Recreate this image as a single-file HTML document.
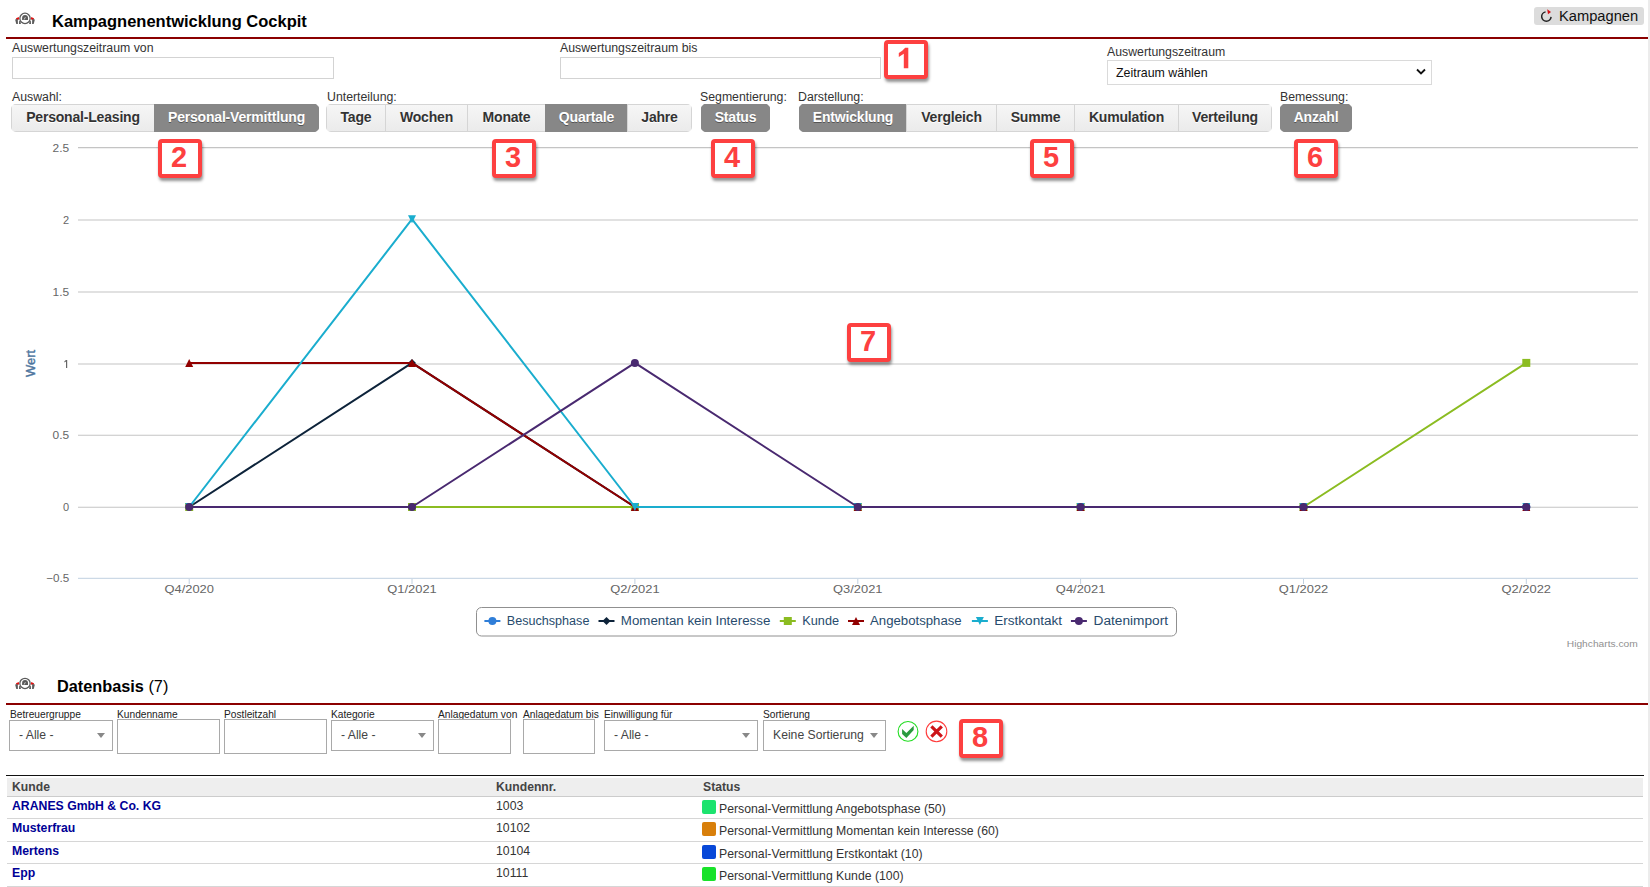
<!DOCTYPE html>
<html><head><meta charset="utf-8">
<style>
*{box-sizing:border-box;}
html,body{margin:0;padding:0;background:#fff;width:1650px;height:887px;overflow:hidden;position:relative;font-family:"Liberation Sans",sans-serif;color:#333;}
.a{position:absolute;white-space:nowrap;}
.redline{position:absolute;left:6px;width:1642px;height:2px;background:#8b0000;}
.sb{position:absolute;left:1648px;top:0;width:2px;height:887px;background:#ececec;}
.lbl{position:absolute;font-size:12.3px;color:#333;line-height:14px;white-space:nowrap;}
.inp{position:absolute;border:1px solid #d3d3d3;background:#fff;}
.grp{position:absolute;top:104px;height:28px;border-radius:5px;overflow:hidden;display:flex;}
.btn{height:28px;line-height:24px;font-weight:bold;font-size:14px;letter-spacing:-0.19px;color:#333;text-align:center;background:linear-gradient(#f6f6f6,#ebebeb);border:1px solid #d5d5d5;border-right:none;text-shadow:0 1px 0 #fff;}
.btn:last-child{border-right:1px solid #d5d5d5;}
.btn.on{background:#878787;color:#fff;text-shadow:0 1px 0 #555;border-color:#878787;}
.btn.on + .btn{border-left-color:#d5d5d5;}
.badge{position:absolute;width:44px;height:39px;border:4px solid #fd4040;border-radius:4px;background:#fff;box-shadow:1px 3px 3px rgba(0,0,0,0.42);color:#fd4040;font-weight:bold;font-size:29px;text-align:center;line-height:28px;text-indent:-2px;}
.flbl{position:absolute;top:709px;font-size:10.2px;color:#222;line-height:12px;white-space:nowrap;}
.sel{position:absolute;top:720px;height:31px;border:1px solid #a9a9a9;background:#fff;font-size:12.2px;color:#444;line-height:29px;padding-left:9px;white-space:nowrap;}
.sel:after{content:"";position:absolute;right:7px;top:12px;border-left:4px solid transparent;border-right:4px solid transparent;border-top:5px solid #888;}
.finp{position:absolute;top:719px;height:35px;border:1px solid #a9a9a9;background:#fff;}
.row{position:absolute;left:7px;width:1636px;border-bottom:1px solid #d6d6d6;}
.cell{position:absolute;font-size:12.25px;white-space:nowrap;}
.sw{position:absolute;width:14px;height:14px;border-radius:2px;}
</style></head><body>
<div class="sb"></div>

<!-- Header -->
<svg class="a" style="left:10px;top:7px" width="30" height="22" viewBox="0 0 30 22">
  <circle cx="15" cy="11.4" r="5.15" fill="none" stroke="#5a5a5a" stroke-width="1.25"/>
  <path d="M12.1 13 V10.9 A2.95 3 0 0 1 18 10.9 V13 Z" fill="#5a5a5a"/>
  <path d="M15.4 10.2 L14.1 12.6" stroke="#e6e6e6" stroke-width="0.8"/>
  <polygon points="6.0,11.2 8.8,9.9 9.1,12.6 6.4,12.9" fill="#e01010"/><polygon points="24.0,11.2 21.2,9.9 20.9,12.6 23.6,12.9" fill="#e01010"/>
  <polygon points="5.1,12.6 7.8,12.1 7.9,17.1 6.3,17.1" fill="#5a5a5a"/><polygon points="24.9,12.6 22.2,12.1 22.1,17.1 23.7,17.1" fill="#5a5a5a"/>
  <polygon points="9.2,13.9 10.4,13.9 10.9,17.1 9.0,17.1" fill="#5a5a5a"/><polygon points="20.8,13.9 19.6,13.9 19.1,17.1 21.0,17.1" fill="#5a5a5a"/>
</svg>
<div class="a" style="left:52px;top:11px;font-size:16.5px;font-weight:bold;color:#000;line-height:20px;">Kampagnenentwicklung Cockpit</div>
<div class="a" style="left:1534px;top:7px;width:110px;height:18px;background:#dcdcdc;border-radius:3px;"></div>
<svg class="a" style="left:1541px;top:8.7px" width="13" height="15" viewBox="0 0 13 15">
  <path d="M10.08 7.91 A4.7 4.7 0 1 1 4.58 2.87" fill="none" stroke="#222" stroke-width="1.5"/>
  <path d="M6.2 0.2 L10 2.9 L7 5.3 Z" fill="#d40f14"/>
</svg>
<div class="a" style="left:1559px;top:7px;font-size:14.7px;color:#111;line-height:18px;">Kampagnen</div>
<div class="redline" style="top:37px"></div>

<!-- Filters row 1 -->
<div class="lbl" style="left:12px;top:41px;">Auswertungszeitraum von</div>
<div class="inp" style="left:12px;top:57px;width:322px;height:22px;"></div>
<div class="lbl" style="left:560px;top:41px;">Auswertungszeitraum bis</div>
<div class="inp" style="left:560px;top:57px;width:321px;height:22px;"></div>
<div class="lbl" style="left:1107px;top:45px;">Auswertungszeitraum</div>
<div class="inp" style="left:1107px;top:60px;width:325px;height:25px;border-color:#dadada;"></div>
<div class="a" style="left:1116px;top:65px;font-size:12.4px;color:#111;line-height:16px;">Zeitraum wählen</div>
<svg class="a" style="left:1416px;top:68.4px" width="10" height="8" viewBox="0 0 10 8"><path d="M1 1.5 L5 5.5 L9 1.5" fill="none" stroke="#111" stroke-width="1.8"/></svg>

<!-- Button groups -->
<div class="lbl" style="left:12px;top:90px;">Auswahl:</div>
<div class="grp" style="left:11px;width:308px;">
  <div class="btn" style="width:143px">Personal-Leasing</div>
  <div class="btn on" style="width:165px">Personal-Vermittlung</div>
</div>
<div class="lbl" style="left:327px;top:90px;">Unterteilung:</div>
<div class="grp" style="left:326px;width:366px;">
  <div class="btn" style="width:59px">Tage</div>
  <div class="btn" style="width:82px">Wochen</div>
  <div class="btn" style="width:78px">Monate</div>
  <div class="btn on" style="width:82px">Quartale</div>
  <div class="btn" style="width:65px">Jahre</div>
</div>
<div class="lbl" style="left:700px;top:90px;">Segmentierung:</div>
<div class="grp" style="left:701px;width:69px;">
  <div class="btn on" style="width:69px">Status</div>
</div>
<div class="lbl" style="left:798px;top:90px;">Darstellung:</div>
<div class="grp" style="left:799px;width:473px;">
  <div class="btn on" style="width:107px">Entwicklung</div>
  <div class="btn" style="width:90px">Vergleich</div>
  <div class="btn" style="width:78px">Summe</div>
  <div class="btn" style="width:104px">Kumulation</div>
  <div class="btn" style="width:94px">Verteilung</div>
</div>
<div class="lbl" style="left:1280px;top:90px;">Bemessung:</div>
<div class="grp" style="left:1280px;width:72px;">
  <div class="btn on" style="width:72px">Anzahl</div>
</div>

<!-- CHART -->
<div id="chart"><svg class="a" style="left:0;top:0" width="1650" height="660" viewBox="0 0 1650 660">
<line x1="78" x2="1638" y1="147.6" y2="147.6" stroke="#c4c4c4" stroke-width="1.05"/>
<line x1="78" x2="1638" y1="220.0" y2="220.0" stroke="#c4c4c4" stroke-width="1.05"/>
<line x1="78" x2="1638" y1="291.9" y2="291.9" stroke="#c4c4c4" stroke-width="1.05"/>
<line x1="78" x2="1638" y1="363.9" y2="363.9" stroke="#c4c4c4" stroke-width="1.05"/>
<line x1="78" x2="1638" y1="435.3" y2="435.3" stroke="#c4c4c4" stroke-width="1.05"/>
<line x1="78" x2="1638" y1="507.2" y2="507.2" stroke="#c4c4c4" stroke-width="1.05"/>
<line x1="78" x2="1638" y1="578.3" y2="578.3" stroke="#C0D0E0" stroke-width="1"/>
<line x1="189.2" x2="189.2" y1="579" y2="584" stroke="#C0D0E0" stroke-width="1"/>
<line x1="412.0" x2="412.0" y1="579" y2="584" stroke="#C0D0E0" stroke-width="1"/>
<line x1="634.9" x2="634.9" y1="579" y2="584" stroke="#C0D0E0" stroke-width="1"/>
<line x1="857.8" x2="857.8" y1="579" y2="584" stroke="#C0D0E0" stroke-width="1"/>
<line x1="1080.6" x2="1080.6" y1="579" y2="584" stroke="#C0D0E0" stroke-width="1"/>
<line x1="1303.5" x2="1303.5" y1="579" y2="584" stroke="#C0D0E0" stroke-width="1"/>
<line x1="1526.3" x2="1526.3" y1="579" y2="584" stroke="#C0D0E0" stroke-width="1"/>
<text x="69.2" y="151.6" text-anchor="end" font-family="Liberation Sans" font-size="11" fill="#666" textLength="16.6" lengthAdjust="spacingAndGlyphs">2.5</text>
<text x="69.2" y="224.0" text-anchor="end" font-family="Liberation Sans" font-size="11" fill="#666">2</text>
<text x="69.2" y="295.9" text-anchor="end" font-family="Liberation Sans" font-size="11" fill="#666" textLength="16.6" lengthAdjust="spacingAndGlyphs">1.5</text>
<path d="M66.0 359.9 L67.2 359.9 L67.2 367.9 L66.0 367.9 L66.0 361.5 L64.4 362.5 L64.4 361.3 Z" fill="#666"/>
<text x="69.2" y="439.3" text-anchor="end" font-family="Liberation Sans" font-size="11" fill="#666" textLength="16.6" lengthAdjust="spacingAndGlyphs">0.5</text>
<text x="69.2" y="511.2" text-anchor="end" font-family="Liberation Sans" font-size="11" fill="#666">0</text>
<text x="69.2" y="582.3" text-anchor="end" font-family="Liberation Sans" font-size="11" fill="#666" textLength="23.0" lengthAdjust="spacingAndGlyphs">−0.5</text>
<text x="189.2" y="592.7" text-anchor="middle" font-family="Liberation Sans" font-size="11" fill="#666" textLength="49.5" lengthAdjust="spacingAndGlyphs">Q4/2020</text>
<text x="412.0" y="592.7" text-anchor="middle" font-family="Liberation Sans" font-size="11" fill="#666" textLength="49.5" lengthAdjust="spacingAndGlyphs">Q1/2021</text>
<text x="634.9" y="592.7" text-anchor="middle" font-family="Liberation Sans" font-size="11" fill="#666" textLength="49.5" lengthAdjust="spacingAndGlyphs">Q2/2021</text>
<text x="857.8" y="592.7" text-anchor="middle" font-family="Liberation Sans" font-size="11" fill="#666" textLength="49.5" lengthAdjust="spacingAndGlyphs">Q3/2021</text>
<text x="1080.6" y="592.7" text-anchor="middle" font-family="Liberation Sans" font-size="11" fill="#666" textLength="49.5" lengthAdjust="spacingAndGlyphs">Q4/2021</text>
<text x="1303.5" y="592.7" text-anchor="middle" font-family="Liberation Sans" font-size="11" fill="#666" textLength="49.5" lengthAdjust="spacingAndGlyphs">Q1/2022</text>
<text x="1526.3" y="592.7" text-anchor="middle" font-family="Liberation Sans" font-size="11" fill="#666" textLength="49.5" lengthAdjust="spacingAndGlyphs">Q2/2022</text>
<text x="0" y="0" transform="translate(34.5,363.4) rotate(-90)" text-anchor="middle" font-family="Liberation Sans" font-size="12.5" fill="#4d759e" stroke="#4d759e" stroke-width="0.4" textLength="27" lengthAdjust="spacingAndGlyphs">Wert</text>
<polyline points="189.2,507.0 412.0,507.0 634.9,507.0 857.8,507.0 1080.6,507.0 1303.5,507.0 1526.3,507.0" fill="none" stroke="#2f7ed8" stroke-width="2" stroke-linejoin="round" stroke-linecap="round"/>
<circle cx="189.2" cy="507.0" r="4" fill="#2f7ed8"/>
<circle cx="412.0" cy="507.0" r="4" fill="#2f7ed8"/>
<circle cx="634.9" cy="507.0" r="4" fill="#2f7ed8"/>
<circle cx="857.8" cy="507.0" r="4" fill="#2f7ed8"/>
<circle cx="1080.6" cy="507.0" r="4" fill="#2f7ed8"/>
<circle cx="1303.5" cy="507.0" r="4" fill="#2f7ed8"/>
<circle cx="1526.3" cy="507.0" r="4" fill="#2f7ed8"/>
<polyline points="189.2,507.0 412.0,362.9 634.9,507.0 857.8,507.0 1080.6,507.0 1303.5,507.0 1526.3,507.0" fill="none" stroke="#0d233a" stroke-width="2" stroke-linejoin="round" stroke-linecap="round"/>
<path d="M189.2 503.0L193.2 507.0L189.2 511.0L185.2 507.0Z" fill="#0d233a"/>
<path d="M412.0 358.9L416.0 362.9L412.0 366.9L408.0 362.9Z" fill="#0d233a"/>
<path d="M634.9 503.0L638.9 507.0L634.9 511.0L630.9 507.0Z" fill="#0d233a"/>
<path d="M857.8 503.0L861.8 507.0L857.8 511.0L853.8 507.0Z" fill="#0d233a"/>
<path d="M1080.6 503.0L1084.6 507.0L1080.6 511.0L1076.6 507.0Z" fill="#0d233a"/>
<path d="M1303.5 503.0L1307.5 507.0L1303.5 511.0L1299.5 507.0Z" fill="#0d233a"/>
<path d="M1526.3 503.0L1530.3 507.0L1526.3 511.0L1522.3 507.0Z" fill="#0d233a"/>
<polyline points="189.2,507.0 412.0,507.0 634.9,507.0 857.8,507.0 1080.6,507.0 1303.5,507.0 1526.3,362.9" fill="none" stroke="#8bbc21" stroke-width="2" stroke-linejoin="round" stroke-linecap="round"/>
<rect x="185.2" y="503.0" width="8" height="8" fill="#8bbc21"/>
<rect x="408.0" y="503.0" width="8" height="8" fill="#8bbc21"/>
<rect x="630.9" y="503.0" width="8" height="8" fill="#8bbc21"/>
<rect x="853.8" y="503.0" width="8" height="8" fill="#8bbc21"/>
<rect x="1076.6" y="503.0" width="8" height="8" fill="#8bbc21"/>
<rect x="1299.5" y="503.0" width="8" height="8" fill="#8bbc21"/>
<rect x="1522.3" y="358.9" width="8" height="8" fill="#8bbc21"/>
<polyline points="189.2,362.9 412.0,362.9 634.9,507.0 857.8,507.0 1080.6,507.0 1303.5,507.0 1526.3,507.0" fill="none" stroke="#910000" stroke-width="2" stroke-linejoin="round" stroke-linecap="round"/>
<path d="M189.2 358.9L193.2 366.9L185.2 366.9Z" fill="#910000"/>
<path d="M412.0 358.9L416.0 366.9L408.0 366.9Z" fill="#910000"/>
<path d="M634.9 503.0L638.9 511.0L630.9 511.0Z" fill="#910000"/>
<path d="M857.8 503.0L861.8 511.0L853.8 511.0Z" fill="#910000"/>
<path d="M1080.6 503.0L1084.6 511.0L1076.6 511.0Z" fill="#910000"/>
<path d="M1303.5 503.0L1307.5 511.0L1299.5 511.0Z" fill="#910000"/>
<path d="M1526.3 503.0L1530.3 511.0L1522.3 511.0Z" fill="#910000"/>
<polyline points="189.2,507.0 412.0,219.2 634.9,507.0 857.8,507.0 1080.6,507.0 1303.5,507.0 1526.3,507.0" fill="none" stroke="#1aadce" stroke-width="2" stroke-linejoin="round" stroke-linecap="round"/>
<path d="M185.2 503.0L193.2 503.0L189.2 511.0Z" fill="#1aadce"/>
<path d="M408.0 215.2L416.0 215.2L412.0 223.2Z" fill="#1aadce"/>
<path d="M630.9 503.0L638.9 503.0L634.9 511.0Z" fill="#1aadce"/>
<path d="M853.8 503.0L861.8 503.0L857.8 511.0Z" fill="#1aadce"/>
<path d="M1076.6 503.0L1084.6 503.0L1080.6 511.0Z" fill="#1aadce"/>
<path d="M1299.5 503.0L1307.5 503.0L1303.5 511.0Z" fill="#1aadce"/>
<path d="M1522.3 503.0L1530.3 503.0L1526.3 511.0Z" fill="#1aadce"/>
<polyline points="189.2,507.0 412.0,507.0 634.9,362.9 857.8,507.0 1080.6,507.0 1303.5,507.0 1526.3,507.0" fill="none" stroke="#492970" stroke-width="2" stroke-linejoin="round" stroke-linecap="round"/>
<circle cx="189.2" cy="507.0" r="4" fill="#492970"/>
<circle cx="412.0" cy="507.0" r="4" fill="#492970"/>
<circle cx="634.9" cy="362.9" r="4" fill="#492970"/>
<circle cx="857.8" cy="507.0" r="4" fill="#492970"/>
<circle cx="1080.6" cy="507.0" r="4" fill="#492970"/>
<circle cx="1303.5" cy="507.0" r="4" fill="#492970"/>
<circle cx="1526.3" cy="507.0" r="4" fill="#492970"/>
<rect x="476.5" y="607.5" width="700" height="28.5" rx="5" ry="5" fill="#fff" stroke="#909090" stroke-width="1"/>
<line x1="484.4" x2="500.4" y1="621" y2="621" stroke="#2f7ed8" stroke-width="2"/>
<circle cx="492.4" cy="621.0" r="4" fill="#2f7ed8"/>
<text x="506.8" y="625" font-family="Liberation Sans" font-size="12" fill="#274b6d" textLength="82.6" lengthAdjust="spacingAndGlyphs">Besuchsphase</text>
<line x1="598.5" x2="614.5" y1="621" y2="621" stroke="#0d233a" stroke-width="2"/>
<path d="M606.5 617.0L610.5 621.0L606.5 625.0L602.5 621.0Z" fill="#0d233a"/>
<text x="620.8" y="625" font-family="Liberation Sans" font-size="12" fill="#274b6d" textLength="149.5" lengthAdjust="spacingAndGlyphs">Momentan kein Interesse</text>
<line x1="779.8" x2="795.8" y1="621" y2="621" stroke="#8bbc21" stroke-width="2"/>
<rect x="783.8" y="617.0" width="8" height="8" fill="#8bbc21"/>
<text x="802.3" y="625" font-family="Liberation Sans" font-size="12" fill="#274b6d" textLength="36.7" lengthAdjust="spacingAndGlyphs">Kunde</text>
<line x1="848" x2="864" y1="621" y2="621" stroke="#910000" stroke-width="2"/>
<path d="M856.0 617.0L860.0 625.0L852.0 625.0Z" fill="#910000"/>
<text x="870" y="625" font-family="Liberation Sans" font-size="12" fill="#274b6d" textLength="91.7" lengthAdjust="spacingAndGlyphs">Angebotsphase</text>
<line x1="971.9" x2="987.9" y1="621" y2="621" stroke="#1aadce" stroke-width="2"/>
<path d="M975.9 617.0L983.9 617.0L979.9 625.0Z" fill="#1aadce"/>
<text x="994.2" y="625" font-family="Liberation Sans" font-size="12" fill="#274b6d" textLength="67.9" lengthAdjust="spacingAndGlyphs">Erstkontakt</text>
<line x1="1070.9" x2="1086.9" y1="621" y2="621" stroke="#492970" stroke-width="2"/>
<circle cx="1078.9" cy="621.0" r="4" fill="#492970"/>
<text x="1093.6" y="625" font-family="Liberation Sans" font-size="12" fill="#274b6d" textLength="74.5" lengthAdjust="spacingAndGlyphs">Datenimport</text>
<text x="1637.7" y="646.9" text-anchor="end" font-family="Liberation Sans" font-size="9" fill="#909090" textLength="70.9" lengthAdjust="spacingAndGlyphs">Highcharts.com</text>
</svg></div>

<!-- Section 2 -->
<svg class="a" style="left:10px;top:672px" width="30" height="22" viewBox="0 0 30 22">
  <circle cx="15" cy="11.4" r="5.15" fill="none" stroke="#5a5a5a" stroke-width="1.25"/>
  <path d="M12.1 13 V10.9 A2.95 3 0 0 1 18 10.9 V13 Z" fill="#5a5a5a"/>
  <path d="M15.4 10.2 L14.1 12.6" stroke="#e6e6e6" stroke-width="0.8"/>
  <polygon points="6.0,11.2 8.8,9.9 9.1,12.6 6.4,12.9" fill="#e01010"/><polygon points="24.0,11.2 21.2,9.9 20.9,12.6 23.6,12.9" fill="#e01010"/>
  <polygon points="5.1,12.6 7.8,12.1 7.9,17.1 6.3,17.1" fill="#5a5a5a"/><polygon points="24.9,12.6 22.2,12.1 22.1,17.1 23.7,17.1" fill="#5a5a5a"/>
  <polygon points="9.2,13.9 10.4,13.9 10.9,17.1 9.0,17.1" fill="#5a5a5a"/><polygon points="20.8,13.9 19.6,13.9 19.1,17.1 21.0,17.1" fill="#5a5a5a"/>
</svg>
<div class="a" style="left:57px;top:676px;font-size:16.3px;color:#000;line-height:20px;"><b>Datenbasis</b> (7)</div>
<div class="redline" style="top:703px"></div>

<div class="flbl" style="left:10px;">Betreuergruppe</div>
<div class="sel" style="left:9px;width:104px;">- Alle -</div>
<div class="flbl" style="left:117px;">Kundenname</div>
<div class="finp" style="left:117px;width:103px;"></div>
<div class="flbl" style="left:224px;">Postleitzahl</div>
<div class="finp" style="left:224px;width:103px;"></div>
<div class="flbl" style="left:331px;">Kategorie</div>
<div class="sel" style="left:331px;width:103px;">- Alle -</div>
<div class="flbl" style="left:438px;">Anlagedatum von</div>
<div class="finp" style="left:438px;width:73px;"></div>
<div class="flbl" style="left:523px;">Anlagedatum bis</div>
<div class="finp" style="left:523px;width:72px;"></div>
<div class="flbl" style="left:604px;">Einwilligung für</div>
<div class="sel" style="left:604px;width:154px;">- Alle -</div>
<div class="flbl" style="left:763px;">Sortierung</div>
<div class="sel" style="left:763px;width:123px;">Keine Sortierung</div>
<svg class="a" style="left:896px;top:720px" width="24" height="24" viewBox="0 0 24 24">
  <circle cx="12" cy="11.4" r="9.9" fill="#fff" stroke="#22dd22" stroke-width="1.1"/>
  <path d="M6.1 8.9 L10.4 12.9 L17.7 5.8 L17.7 9.9 L10.4 17.9 L6.1 14 Z" fill="#2a9a3e"/>
</svg>
<svg class="a" style="left:924px;top:720px" width="26" height="24" viewBox="0 0 26 24">
  <circle cx="12.5" cy="11.4" r="10.3" fill="#fff" stroke="#ff3b3b" stroke-width="1.1"/>
  <path d="M7.4 6.4 L17.8 16.6 M17.8 6.4 L7.4 16.6" stroke="#cc1418" stroke-width="3.2"/>
</svg>

<!-- Table -->
<div class="a" style="left:6px;top:775px;width:1638px;height:1px;background:#111;"></div>
<div class="a" style="left:7px;top:778px;width:1636px;height:19px;background:#eeeeee;border-bottom:1px solid #cccccc;"></div>
<div class="cell" style="left:12px;top:780px;font-weight:bold;color:#444;font-size:12.2px;">Kunde</div>
<div class="cell" style="left:496px;top:780px;font-weight:bold;color:#444;font-size:12.2px;">Kundennr.</div>
<div class="cell" style="left:703px;top:780px;font-weight:bold;color:#444;font-size:12.2px;">Status</div>

<div class="row" style="top:796px;height:23px;"></div>
<div class="row" style="top:818px;height:24px;"></div>
<div class="row" style="top:841px;height:23px;"></div>
<div class="row" style="top:863px;height:24px;"></div>

<div class="cell" style="left:12px;top:799px;font-weight:bold;color:#000096;">ARANES GmbH &amp; Co. KG</div>
<div class="cell" style="left:496px;top:799px;color:#333;">1003</div>
<div class="sw" style="left:702px;top:800px;background:#1ce36e;"></div>
<div class="cell" style="left:719px;top:802px;color:#333;">Personal-Vermittlung Angebotsphase (50)</div>

<div class="cell" style="left:12px;top:821px;font-weight:bold;color:#000096;">Musterfrau</div>
<div class="cell" style="left:496px;top:821px;color:#333;">10102</div>
<div class="sw" style="left:702px;top:822px;background:#d87f0a;"></div>
<div class="cell" style="left:719px;top:824px;color:#333;">Personal-Vermittlung Momentan kein Interesse (60)</div>

<div class="cell" style="left:12px;top:844px;font-weight:bold;color:#000096;">Mertens</div>
<div class="cell" style="left:496px;top:844px;color:#333;">10104</div>
<div class="sw" style="left:702px;top:845px;background:#0848d8;"></div>
<div class="cell" style="left:719px;top:847px;color:#333;">Personal-Vermittlung Erstkontakt (10)</div>

<div class="cell" style="left:12px;top:866px;font-weight:bold;color:#000096;">Epp</div>
<div class="cell" style="left:496px;top:866px;color:#333;">10111</div>
<div class="sw" style="left:702px;top:867px;background:#18e22a;"></div>
<div class="cell" style="left:719px;top:869px;color:#333;">Personal-Vermittlung Kunde (100)</div>

<!-- Badges -->
<div class="badge" style="left:884px;top:40px;"><svg style="position:absolute;left:0;top:0" width="36" height="31" viewBox="0 0 36 31"><path d="M19.9 3.8 L20.3 3.8 L20.3 24.2 L15.8 24.2 L15.8 9.8 L10.8 13.0 L10.8 8.9 L14.2 6.8 L17.2 3.8 Z" fill="#fd4040"/></svg></div>
<div class="badge" style="left:158px;top:139px;">2</div>
<div class="badge" style="left:492px;top:139px;">3</div>
<div class="badge" style="left:711px;top:139px;">4</div>
<div class="badge" style="left:1030px;top:139px;">5</div>
<div class="badge" style="left:1294px;top:139px;">6</div>
<div class="badge" style="left:847px;top:323px;">7</div>
<div class="badge" style="left:959px;top:719px;">8</div>

</body></html>
